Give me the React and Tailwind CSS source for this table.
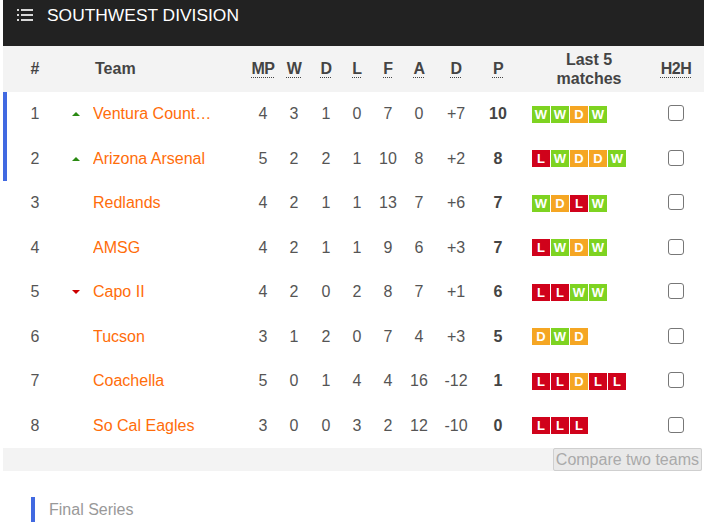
const teams = [
  { pos: 1, move: "up", name: "Ventura County Fusion", mp: 4, w: 3, d: 1, l: 0, f: 7, a: 0, gd: "+7", pts: 10, form: "WWDW", mark: true },
  { pos: 2, move: "up", name: "Arizona Arsenal", mp: 5, w: 2, d: 2, l: 1, f: 10, a: 8, gd: "+2", pts: 8, form: "LWDDW", mark: true },
  { pos: 3, name: "Redlands", mp: 4, w: 2, d: 1, l: 1, f: 13, a: 7, gd: "+6", pts: 7, form: "WDLW" },
  { pos: 4, name: "AMSG", mp: 4, w: 2, d: 1, l: 1, f: 9, a: 6, gd: "+3", pts: 7, form: "LWDW" },
  { pos: 5, move: "down", name: "Capo II", mp: 4, w: 2, d: 0, l: 2, f: 8, a: 7, gd: "+1", pts: 6, form: "LLWW" },
  { pos: 6, name: "Tucson", mp: 3, w: 1, d: 2, l: 0, f: 7, a: 4, gd: "+3", pts: 5, form: "DWD" },
  { pos: 7, name: "Coachella", mp: 5, w: 0, d: 1, l: 4, f: 4, a: 16, gd: "-12", pts: 1, form: "LLDLL" },
  { pos: 8, name: "So Cal Eagles", mp: 3, w: 0, d: 0, l: 3, f: 2, a: 12, gd: "-10", pts: 0, form: "LLL" },
];

const formColor = {
  W: "bg-[#7ed321]",
  D: "bg-[#f5a623]",
  L: "bg-[#d0021b]",
};

const cols =
  "grid grid-cols-[56px_25px_160px_30px_32px_32px_30px_32px_30px_44px_40px_134px_48px] items-center";

function Abbr({ children }) {
  return (
    <span className="underline decoration-dotted decoration-1 underline-offset-[3px] tracking-[-0.5px]">
      {children}
    </span>
  );
}

function Arrow({ dir }) {
  if (dir === "up")
    return <div className="w-0 h-0 border-x-[4px] border-x-transparent border-b-[4px] border-b-[#2a8a12]" />;
  if (dir === "down")
    return <div className="w-0 h-0 border-x-[4px] border-x-transparent border-t-[4px] border-t-[#cc0000]" />;
  return null;
}

export default function App() {
  return (
    <div
      className="w-[704px] h-[525px] bg-white overflow-hidden text-[16px]"
      style={{ fontFamily: '"Liberation Sans", Arial, sans-serif' }}
    >
      <div className="ml-[3px]">
        <div className="h-[46px] bg-[#222222] flex items-start pt-[5px] pl-[14px] gap-[14px]">
          <svg width="16" height="12" viewBox="0 0 16 12" className="mt-[4px]" fill="#d8d8d8">
            <rect x="0" y="0" width="2" height="2" />
            <rect x="4" y="0" width="12" height="2" />
            <rect x="0" y="5" width="2" height="2" />
            <rect x="4" y="5" width="12" height="2" />
            <rect x="0" y="10" width="2" height="2" />
            <rect x="4" y="10" width="12" height="2" />
          </svg>
          <span className="text-white text-[17.4px] leading-[20px]">SOUTHWEST DIVISION</span>
        </div>

        <div className={`${cols} h-[46px] bg-[#f3f3f3] border-l-4 border-transparent font-bold text-[#444]`}>
          <div className="text-center">#</div>
          <div />
          <div className="pl-[7px]">Team</div>
          <div className="text-center"><Abbr>MP</Abbr></div>
          <div className="text-center"><Abbr>W</Abbr></div>
          <div className="text-center"><Abbr>D</Abbr></div>
          <div className="text-center"><Abbr>L</Abbr></div>
          <div className="text-center"><Abbr>F</Abbr></div>
          <div className="text-center"><Abbr>A</Abbr></div>
          <div className="text-center"><Abbr>D</Abbr></div>
          <div className="text-center"><Abbr>P</Abbr></div>
          <div className="text-center pl-[8px] leading-[19px]">Last 5<br />matches</div>
          <div className="text-center"><Abbr>H2H</Abbr></div>
        </div>

        {teams.map((t) => (
          <div
            key={t.pos}
            className={`${cols} h-[44.5px] border-l-4 ${t.mark ? "border-[#4169e1]" : "border-transparent"} text-[#555]`}
          >
            <div className="text-center">{t.pos}</div>
            <div className="flex justify-center">
              <Arrow dir={t.move} />
            </div>
            <div className="pl-[5px]">
              <div className="max-w-[122px] truncate text-[#ff6d0a]">{t.name}</div>
            </div>
            <div className="text-center">{t.mp}</div>
            <div className="text-center">{t.w}</div>
            <div className="text-center">{t.d}</div>
            <div className="text-center">{t.l}</div>
            <div className="text-center">{t.f}</div>
            <div className="text-center">{t.a}</div>
            <div className="text-center">{t.gd}</div>
            <div className="text-center font-bold text-[#444]">{t.pts}</div>
            <div className="flex gap-[1px] pl-[14px]">
              {t.form.split("").map((r, i) => (
                <div
                  key={i}
                  className={`w-[18px] h-[17px] ${formColor[r]} text-white font-bold text-[13px] leading-[17px] text-center`}
                >
                  {r}
                </div>
              ))}
            </div>
            <div className="flex justify-center">
              <div className="w-[16px] h-[16px] border-[1.5px] border-[#777] rounded-[3px] bg-white -mt-[2px]" />
            </div>
          </div>
        ))}

        <div className="h-[23px] w-[699px] bg-[#f3f3f3] flex justify-end">
          <button className="h-[23px] px-[2px] border border-[#cfcfcf] rounded-[2px] bg-[#e9e9e9] text-[#aaa] text-[16px] leading-[20px]">
            Compare two teams
          </button>
        </div>

        <div className="mt-[26px] ml-[28px] flex items-center gap-[14px] h-[25px]">
          <div className="w-[4px] h-[25px] bg-[#4169e1]" />
          <span className="text-[#999]">Final Series</span>
        </div>
      </div>
    </div>
  );
}
